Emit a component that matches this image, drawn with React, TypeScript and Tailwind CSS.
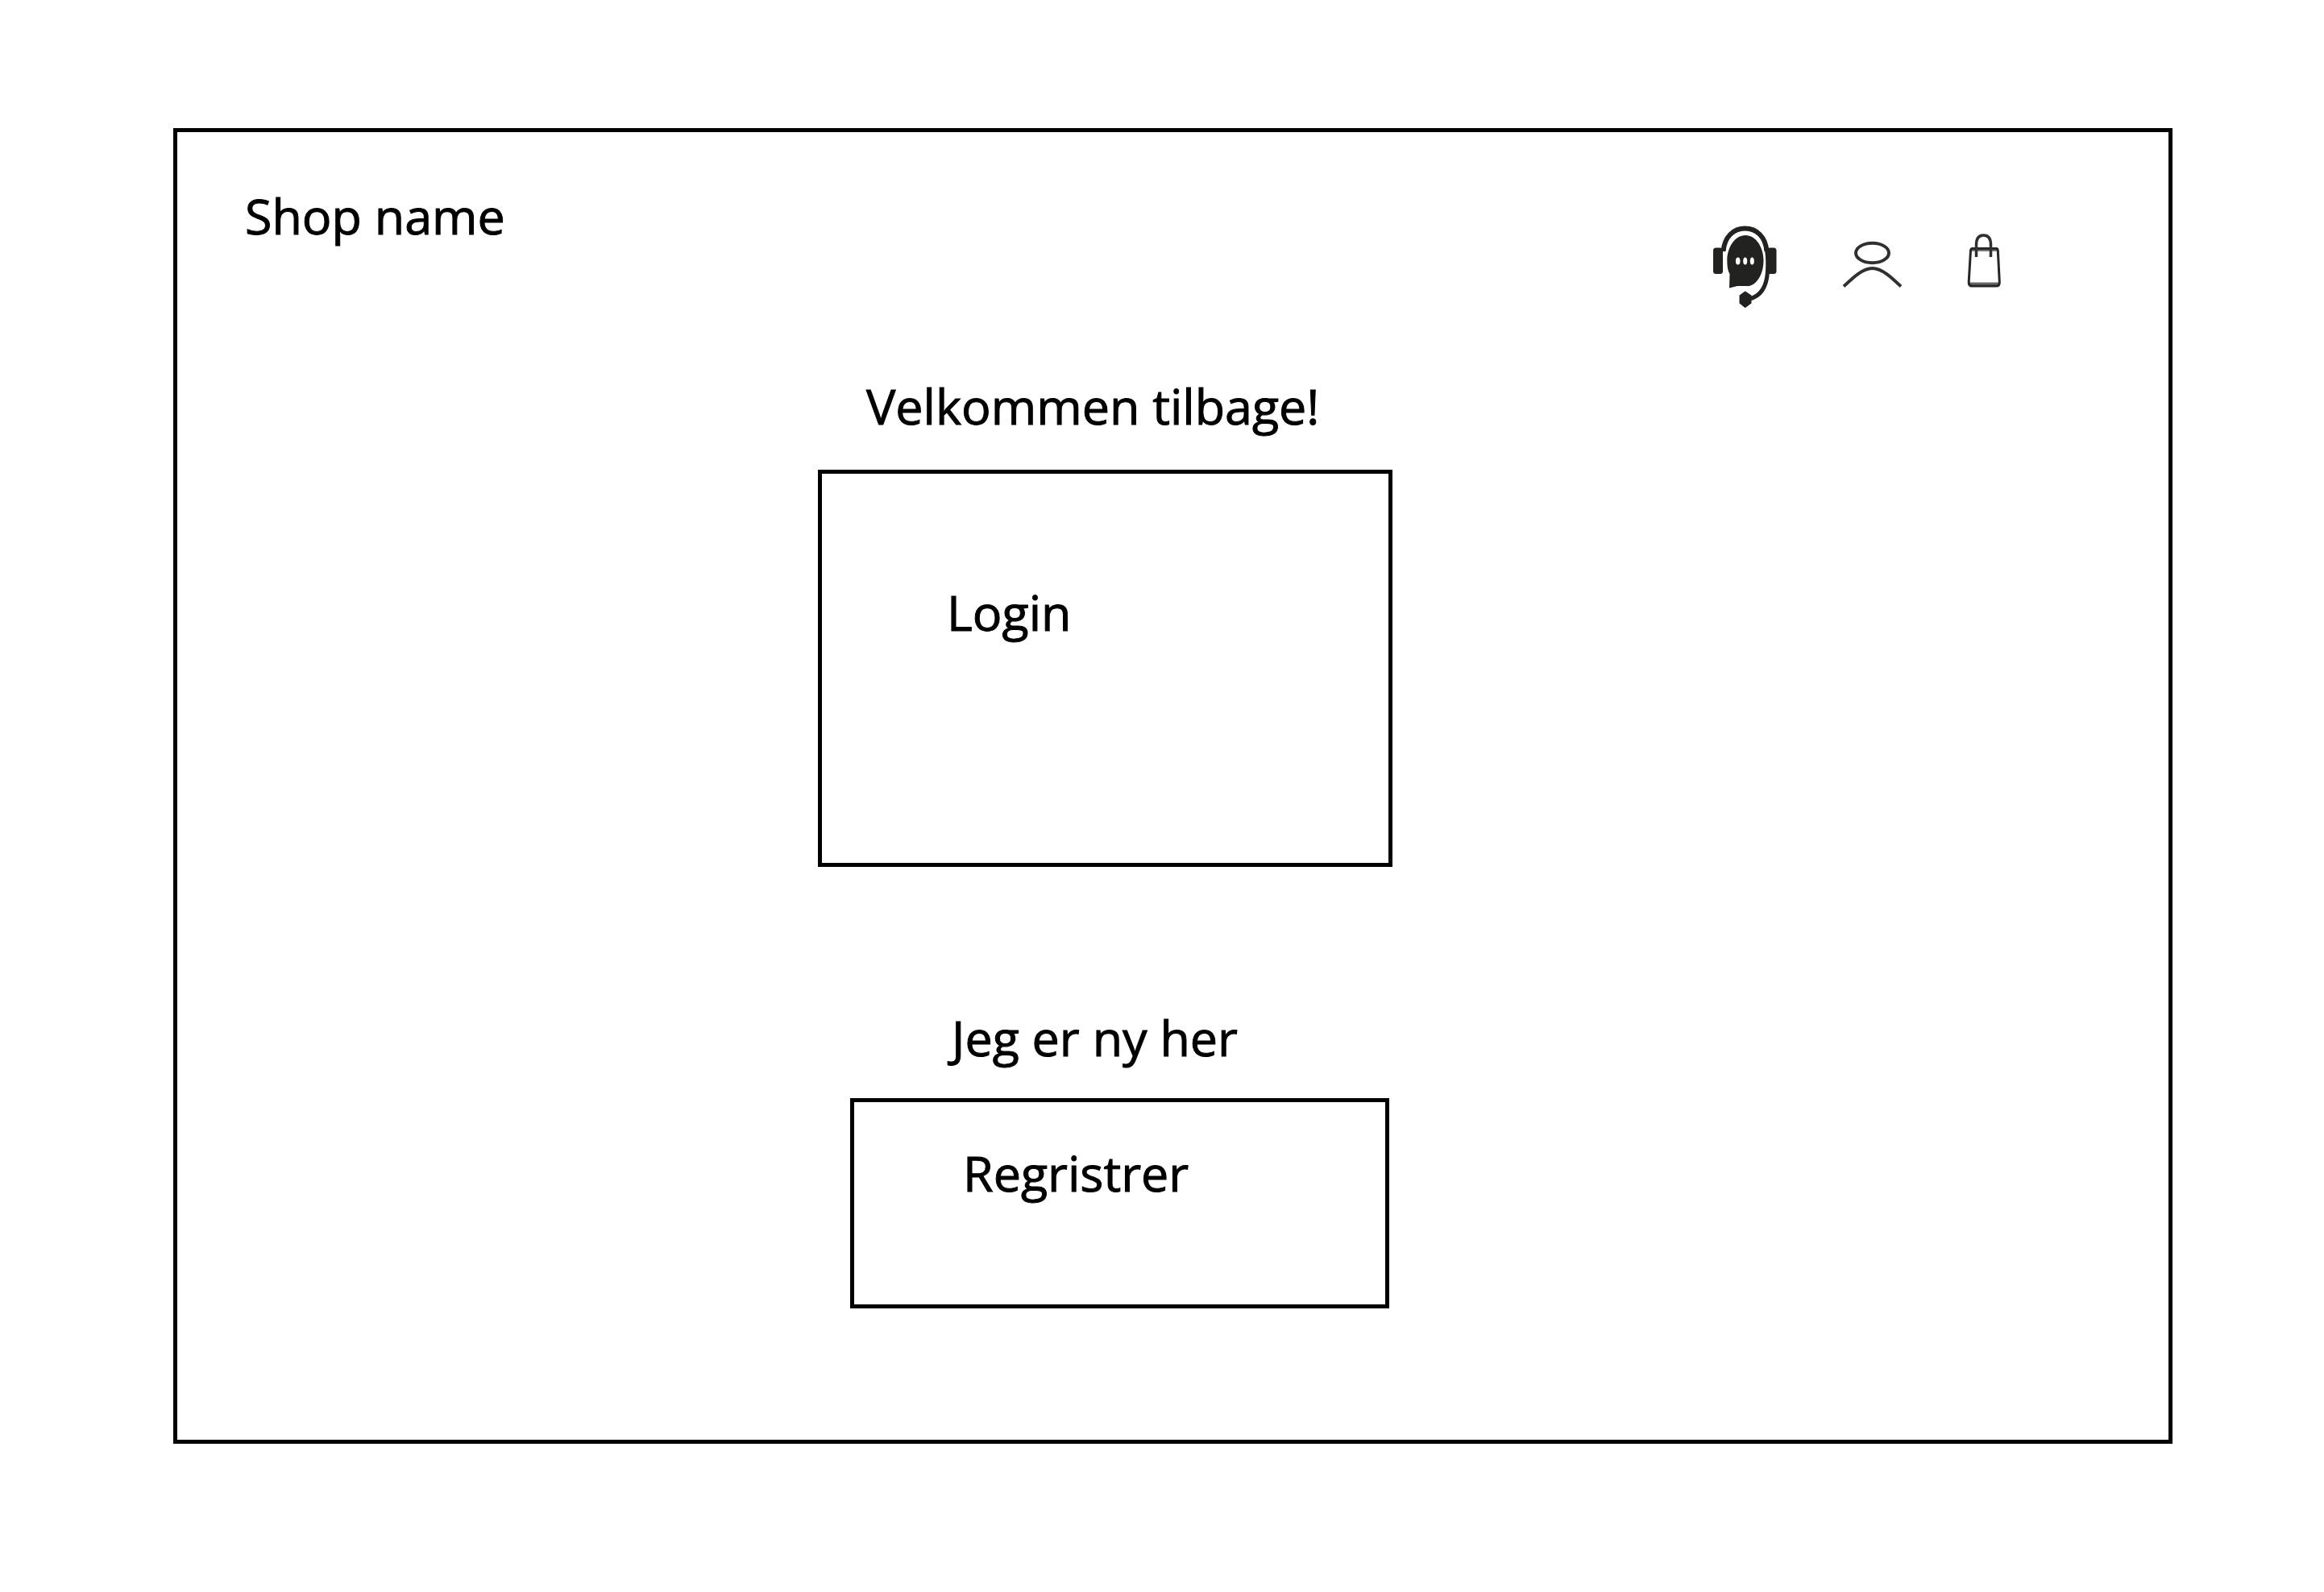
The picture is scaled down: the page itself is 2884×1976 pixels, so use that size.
import type { ReactNode } from "react";

function SupportIcon() {
  return (
    <svg className="h-26 w-20" viewBox="0 0 80 104" fill="none" aria-hidden="true">
      <rect x="1" y="27.5" width="12" height="32.5" rx="3.5" fill="#222220" />
      <rect x="68" y="27.5" width="11.5" height="32.5" rx="3.5" fill="#222220" />
      <path d="M13.5 32C15 14 26 3.5 40.5 3.5S66 14 67.5 32" stroke="#222220" strokeWidth="6" />
      <path d="M67.5 30C68.5 36 69 48 68.5 57C67.5 74 62 87 46 91" stroke="#222220" strokeWidth="5" />
      <path
        d="M41 12C54 12 63.5 27 63.5 43C63.5 60 56 72 46 75H31L21 77.5L21.5 60C19 56 18.3 50 18.3 43C18.3 27 28 12 41 12Z"
        fill="#222220"
      />
      <ellipse cx="31.7" cy="44" rx="2.8" ry="4.5" fill="#fff" />
      <ellipse cx="40.7" cy="44" rx="2.5" ry="4.5" fill="#fff" />
      <ellipse cx="49.3" cy="44" rx="2.5" ry="4.5" fill="#fff" />
      <path
        d="M40.7 82.5L47.5 87V96L40.7 101L34.5 96V87Z"
        fill="#222220"
        stroke="#222220"
        strokeWidth="2"
        strokeLinejoin="round"
      />
    </svg>
  );
}

function UserIcon() {
  return (
    <svg className="h-26 w-19" viewBox="0 0 76 104" fill="none" stroke="#303030" strokeWidth="4" aria-hidden="true">
      <ellipse cx="38.5" cy="34" rx="20.5" ry="12.2" />
      <path d="M3 75.5C13 66 26 53 38.5 53S64 66 74 75.5" />
    </svg>
  );
}

function BagIcon() {
  return (
    <svg className="h-26 w-11" viewBox="0 0 44 104" fill="none" aria-hidden="true">
      <path d="M6 29.5H37.5" stroke="#777" strokeWidth="5" />
      <path d="M3 72.5H39" stroke="#666" strokeWidth="4" />
      <path
        d="M7 28.5H36.5Q38 28.5 38.3 31L40.3 70Q40.3 75 37 75H6Q2 75 2.2 70L4.5 31Q4.7 28.5 7 28.5Z"
        stroke="#262626"
        strokeWidth="3"
      />
      <path d="M11.5 39V24C11.5 16 15 12 20.5 12S29.5 16 29.5 24V39" stroke="#303030" strokeWidth="3.5" />
    </svg>
  );
}

function IconButton({ label, children }: { label: string; children: ReactNode }) {
  return (
    <button type="button" aria-label={label} className="cursor-pointer">
      {children}
    </button>
  );
}

export default function App() {
  return (
    <div className="min-h-screen bg-white pt-[159px] pr-[188px] pb-[184px] pl-[215px] font-['Open_Sans',sans-serif] text-[61px] leading-[80px] text-black [-webkit-text-stroke:1px_black]">
      <div className="border-5 border-black pt-16 pb-[163px]">
        <header className="flex items-start justify-between pr-[206px] pl-[84px]">
          <h1>Shop name</h1>
          <nav className="mt-13 flex gap-20">
            <IconButton label="Kundeservice">
              <SupportIcon />
            </IconButton>
            <IconButton label="Min konto">
              <UserIcon />
            </IconButton>
            <IconButton label="Kurv">
              <BagIcon />
            </IconButton>
          </nav>
        </header>

        <main className="flex flex-col items-center pt-20 pr-[168px]">
          <section className="w-full max-w-[713px]">
            <h2 className="pl-15">Velkommen tilbage!</h2>
            <div className="mt-[39px] border-5 border-black pt-[132px] pb-[271px] pl-[155px]">
              <button type="button" className="block cursor-pointer">
                Login
              </button>
            </div>
          </section>

          <section className="mt-[172px] w-full max-w-[713px] pr-1 pl-10">
            <h2 className="pl-[126px]">Jeg er ny her</h2>
            <div className="mt-[35px] border-5 border-black pt-12 pb-[123px] pl-[135px]">
              <button type="button" className="block cursor-pointer">
                Regristrer
              </button>
            </div>
          </section>
        </main>
      </div>
    </div>
  );
}
